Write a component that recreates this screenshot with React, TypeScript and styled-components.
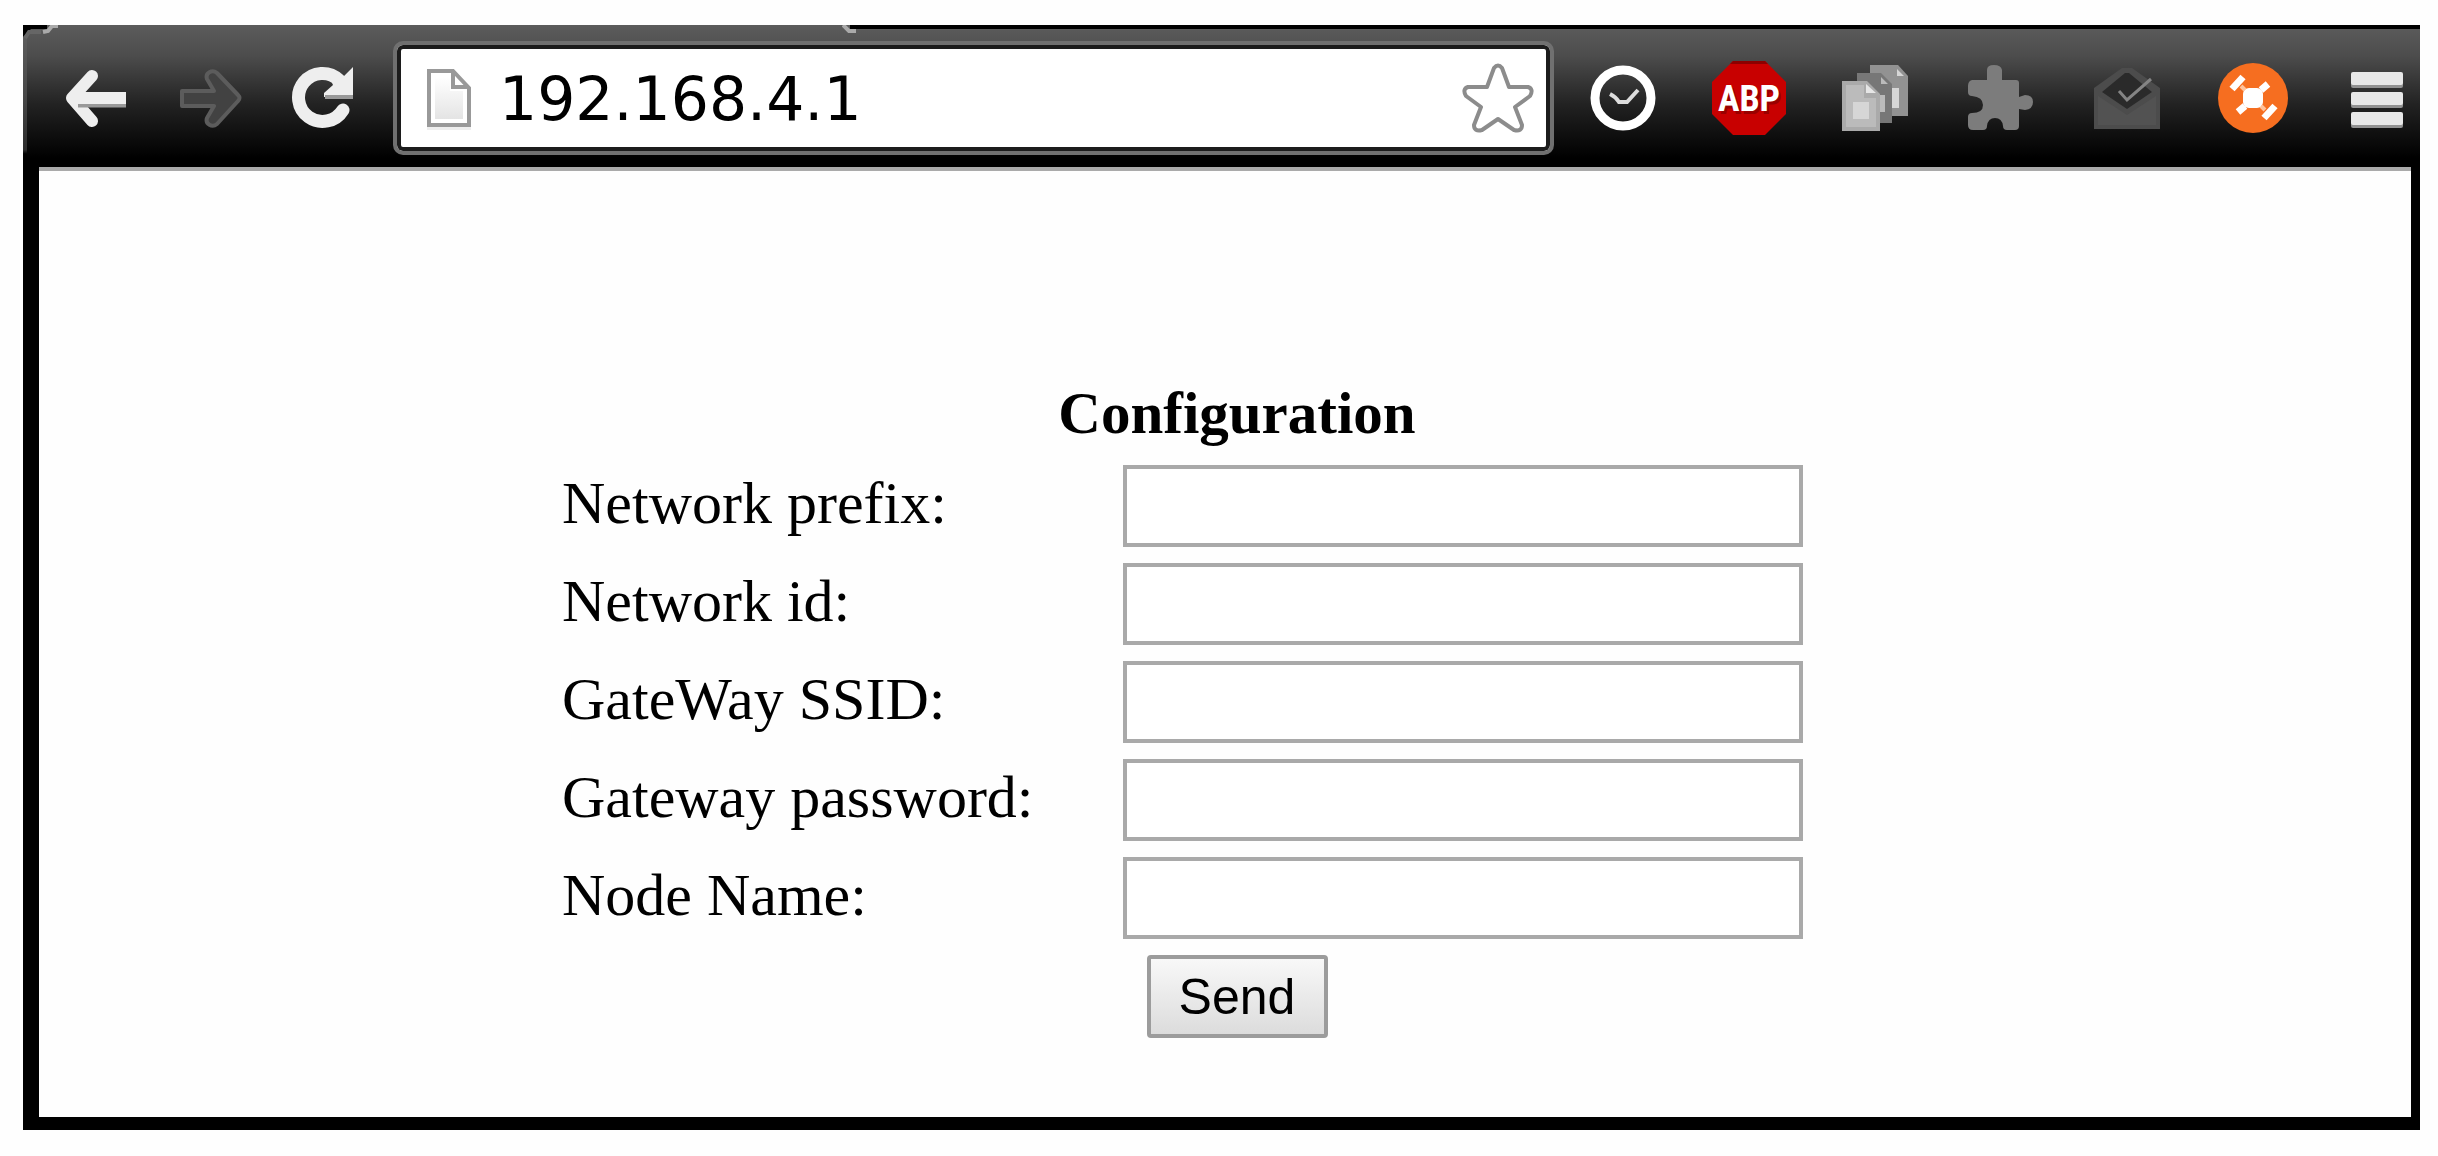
import React from "react";
import styled, { createGlobalStyle } from "styled-components";

const GlobalStyle = createGlobalStyle`
  *, *::before, *::after { box-sizing: border-box; }
  body { margin: 0; background: #fefefe; }
`;

const Desktop = styled.div`
  padding: 25px 18px 26px 23px;
`;

const BrowserWindow = styled.div`
  position: relative;
  background: #000;
  padding-bottom: 13px;
`;

const Toolbar = styled.header`
  display: flex;
  align-items: center;
  padding: 16px 16px 12px 12px;
  border-left: 4px solid;
  border-image: linear-gradient(#000 4px, #5c5c5c 14px, #484848 70px, #2c2c2c 124px, #000 128px) 1;
  border-right: 0;
  border-top: 0;
  border-bottom: 0;
  background: linear-gradient(#5c5c5c, #4c4c4c 22%, #383838 38%, #222 56%, #101010 76%, #000 94%);
`;

const TabStrip = styled.div`
  position: absolute;
  inset: 0 0 auto 0;
  display: flex;
  align-items: flex-start;
`;

const TabGap = styled.div`
  width: 783px;
`;

const StripRest = styled.div`
  flex: 1;
  height: 4px;
  background: #000;
`;

const IconButton = styled.button<{ $width: number }>`
  display: flex;
  flex: none;
  align-items: center;
  justify-content: center;
  width: ${(p) => p.$width}px;
  height: 84px;
  padding: 0;
  border: 0;
  background: none;

  svg { display: block; }
`;

const MenuButton = styled(IconButton)`
  margin-left: 34px;
`;

const AddressBar = styled.div`
  display: flex;
  flex: 1;
  align-items: center;
  min-width: 0;
  height: 114px;
  margin: 0 6px 0 12px;
  padding: 0 16px 0 30px;
  border: 4px solid #707070;
  border-radius: 10px;
  background: #fff;
  box-shadow: inset 0 0 0 4px #1c1c1c;

  > svg { flex: none; }
`;

const Address = styled.input`
  flex: 1;
  min-width: 0;
  height: 82px;
  margin-left: 28px;
  padding: 2px 0 0;
  border: 0;
  outline: 0;
  background: transparent;
  color: #000;
  font: 60px "DejaVu Sans", sans-serif;
`;

const Page = styled.main`
  margin: 0 9px 0 16px;
  padding: 206px 0 79px 24px;
  border-top: 4px solid #aaa;
  background: #fefefe;
`;

const ConfigForm = styled.form`
  display: grid;
  grid-template-columns: 561px 680px;
  row-gap: 16px;
  width: 1350px;
  max-width: 100%;
  margin: 0 auto;
  color: #000;
  font-family: "Liberation Serif", serif;
  font-size: 60px;
`;

const Title = styled.h1`
  grid-column: 1 / -1;
  width: 1350px;
  margin: 0;
  font-size: 59px;
  font-weight: 700;
  line-height: 72px;
  text-align: center;
`;

const Label = styled.label`
  line-height: 76px;
`;

const TextInput = styled.input`
  width: 100%;
  height: 82px;
  padding: 0 8px;
  border: 4px solid #a9a9a9;
  border-radius: 0;
  outline: 0;
  background: #fff;
  font: 50px "Liberation Sans", sans-serif;
`;

const Actions = styled.div`
  display: flex;
  grid-column: 1 / -1;
  justify-content: center;
  width: 1350px;
`;

const SendButton = styled.button`
  width: 181px;
  height: 83px;
  padding: 0;
  border: 4px solid #9c9c9c;
  border-radius: 4px;
  background: linear-gradient(#f8f8f8, #dcdcdc);
  color: #000;
  font: 50px "Liberation Sans", sans-serif;
`;

const BackIcon = () => (
  <svg width="64" height="60" viewBox="0 -1 64 60" fill="none" strokeLinecap="round" strokeLinejoin="round">
    <path d="M28 7 8 29l20 23" stroke="#eee" strokeWidth="12" />
    <path d="M14 32h48" stroke="#999" strokeWidth="13" strokeLinecap="butt" />
    <path d="M10 29h52" stroke="#eee" strokeWidth="12" strokeLinecap="butt" />
  </svg>
);

const ForwardIcon = () => (
  <svg width="64" height="60" viewBox="0 -1 64 60">
    <path
      d="M4 22h32L29 10c-2-6 5-10 10-6l21 22q3 3 0 6L39 55c-5 4-12 0-10-6l7-12H4Z"
      fill="#424242"
      stroke="#5c5c5c"
      strokeWidth="4"
      strokeLinejoin="round"
    />
  </svg>
);

const ReloadIcon = () => (
  <svg width="64" height="68" viewBox="0 -1 64 68">
    <path d="M51 45A24 24 0 1 1 47 15" fill="none" stroke="#eee" strokeWidth="13" strokeLinecap="round" />
    <path d="M61 2v30H32v-4l9-8-4-9 14 1Z" fill="#eee" />
    <path d="M33 32h28" stroke="#999" strokeWidth="4" />
  </svg>
);

const PageIcon = () => (
  <svg width="44" height="64" viewBox="0 -1 44 64">
    <defs>
      <linearGradient id="sheet" x1="0" y1="0" x2="0" y2="1">
        <stop offset="0" stopColor="#fff" />
        <stop offset="1" stopColor="#e4e4e4" />
      </linearGradient>
    </defs>
    <path d="M0 61h44" stroke="#eee" strokeWidth="4" />
    <path d="M2 4h24l16 17v37H2Z" fill="#fff" stroke="#999" strokeWidth="4" />
    <path d="M8 10h15v14h13v28H8Z" fill="url(#sheet)" />
    <path d="M26 4v16h16" fill="none" stroke="#999" strokeWidth="4" />
  </svg>
);

const StarIcon = () => (
  <svg width="72" height="70" viewBox="0 0 72 70">
    <path
      d="M32 5q4-5 8 0l7 19h19q6 2 2 9L53 44l7 18q0 7-8 5L36 56 20 67q-8 2-8-5l7-18L4 33q-4-7 2-9h19Z"
      fill="#fff"
      stroke="#8c8c8c"
      strokeWidth="4"
      strokeLinejoin="round"
    />
  </svg>
);

const ClockIcon = () => (
  <svg width="68" height="68" viewBox="0 0 68 68" fill="none" stroke="#fff">
    <circle cx="34" cy="34" r="28" strokeWidth="9" />
    <path d="M21 30q6 3 9 8h8l11-12" strokeWidth="4" stroke="#ddd" />
  </svg>
);

const AdblockIcon = () => (
  <svg width="76" height="76" viewBox="0 0 76 76">
    <path d="M22 1h32l21 21v32L54 75H22L1 54V22Z" fill="#c80000" />
    <path d="M22 1h32l3 3H19Z" fill="#8c0000" />
    <g fontFamily="'Liberation Sans Narrow', 'Roboto Condensed', Roboto, sans-serif" fontWeight="700" fontSize="36" textAnchor="middle">
      <text x="40" y="54" fill="#900">ABP</text>
      <text x="38" y="51" fill="#fff">ABP</text>
    </g>
  </svg>
);

const PagesIcon = () => (
  <svg width="68" height="68" viewBox="0 0 68 68">
    <path d="M29 1h28l10 11v40H29Z" fill="#929292" />
    <path d="M56 5l7 7h-7ZM50 24h8v20h-8Z" fill="#d6d6d6" />
    <path d="M16 9h24l11 11v39H16Z" fill="#777" />
    <path d="M40 13l7 7h-7ZM38 31h6v17h-6Z" fill="#bbb" />
    <path d="M1 17h25l13 13v37H1Z" fill="#aaa" />
    <path d="M5 21h18v13h12v29H5Z" fill="#bbb" />
    <path d="M25 20l10 9H25Z" fill="#e6e6e6" />
    <path d="M12 38h16v17H12Z" fill="#d6d6d6" />
  </svg>
);

const PuzzleIcon = () => (
  <svg width="68" height="68" viewBox="0 0 68 68">
    <path
      d="M5 16H20V6q0-5 7-5t8 5v10h14q3 0 3 3v14l6-2q8 0 8 7t-8 8l-6-1v17q0 4-4 4h-8q-4 0-4-4-1-8-8-8t-8 8q0 4-4 4H6q-5 0-5-5v-8q0-4 4-4 11 0 11-8t-11-9q-4 0-4-4v-6q0-5 4-6Z"
      fill="#7c7c7c"
    />
  </svg>
);

const MailIcon = () => (
  <svg width="68" height="64" viewBox="0 0 68 64">
    <path d="M1 63V22L29 2h10l28 20v41Z" fill="#4c4c4c" />
    <path d="M9 26 32 7h4l23 19-25 17Z" fill="#2a2a2a" />
    <path d="M5 30l29 19 29-19v29H5Z" fill="#525252" />
    <path d="M26 25l8 9 24-21" fill="none" stroke="#848484" strokeWidth="3" />
  </svg>
);

const HubIcon = () => (
  <svg width="74" height="74" viewBox="0 0 74 74">
    <circle cx="37" cy="37" r="35" fill="#f66e20" />
    <rect x="27" y="27" width="20" height="20" rx="6" fill="#fff" />
    <path d="M45 29l7-6M29 45l-7 6" stroke="#fff" strokeWidth="7" />
    <path d="M16 28l11-12M48 57l11-12" stroke="#fff" strokeWidth="7" />
    <path d="M25 25l4 4M45 45l4 4" stroke="#ffc39c" strokeWidth="4" />
  </svg>
);

const MenuIcon = () => (
  <svg width="54" height="60" viewBox="0 -2 54 60">
    {[2, 22, 42].map((y) => (
      <g key={y}>
        <rect x="1" y={y + 3} width="52" height="13" rx="2" fill="#929292" />
        <rect x="1" y={y} width="52" height="13" rx="2" fill="#e8e8e8" />
      </g>
    ))}
  </svg>
);

const navigation = [
  { name: "Back", Icon: BackIcon },
  { name: "Forward", Icon: ForwardIcon },
  { name: "Reload", Icon: ReloadIcon },
];

const extensions = [
  { name: "History", Icon: ClockIcon },
  { name: "Adblock Plus", Icon: AdblockIcon },
  { name: "Copy pages", Icon: PagesIcon },
  { name: "Extensions", Icon: PuzzleIcon },
  { name: "Mail", Icon: MailIcon },
  { name: "Hub", Icon: HubIcon },
];

const fields = [
  { id: "prefix", label: "Network prefix:", type: "text" },
  { id: "network-id", label: "Network id:", type: "text" },
  { id: "ssid", label: "GateWay SSID:", type: "text" },
  { id: "password", label: "Gateway password:", type: "password" },
  { id: "node", label: "Node Name:", type: "text" },
];

export default function App() {
  return (
    <Desktop>
      <GlobalStyle />
      <BrowserWindow>
        <Toolbar>
          {navigation.map(({ name, Icon }) => (
            <IconButton key={name} $width={114} type="button" aria-label={name}>
              <Icon />
            </IconButton>
          ))}
          <AddressBar>
            <PageIcon />
            <Address aria-label="Address" defaultValue="192.168.4.1" spellCheck={false} />
            <IconButton $width={72} type="button" aria-label="Bookmark">
              <StarIcon />
            </IconButton>
          </AddressBar>
          {extensions.map(({ name, Icon }) => (
            <IconButton key={name} $width={126} type="button" aria-label={name}>
              <Icon />
            </IconButton>
          ))}
          <MenuButton $width={54} type="button" aria-label="Menu">
            <MenuIcon />
          </MenuButton>
        </Toolbar>
        <TabStrip aria-hidden="true">
          <svg width="36" height="14" viewBox="0 0 36 14">
            <path d="M0 0h24v4H8L0 12Z" fill="#000" />
            <path d="M2 13l4-6h12" fill="none" stroke="#666" strokeWidth="4" />
            <path d="M20 7l5-1 4-5h6" fill="none" stroke="#aaa" strokeWidth="4" />
          </svg>
          <TabGap />
          <svg width="14" height="8" viewBox="0 0 14 8">
            <path d="M8 0h6v4h-6Z" fill="#000" />
            <path d="M1 0l6 6h7" fill="none" stroke="#aaa" strokeWidth="4" />
          </svg>
          <StripRest />
        </TabStrip>
        <Page>
          <ConfigForm onSubmit={(event) => event.preventDefault()}>
            <Title>Configuration</Title>
            {fields.map(({ id, label, type }) => (
              <React.Fragment key={id}>
                <Label htmlFor={id}>{label}</Label>
                <TextInput id={id} name={id} type={type} />
              </React.Fragment>
            ))}
            <Actions>
              <SendButton type="submit">Send</SendButton>
            </Actions>
          </ConfigForm>
        </Page>
      </BrowserWindow>
    </Desktop>
  );
}
